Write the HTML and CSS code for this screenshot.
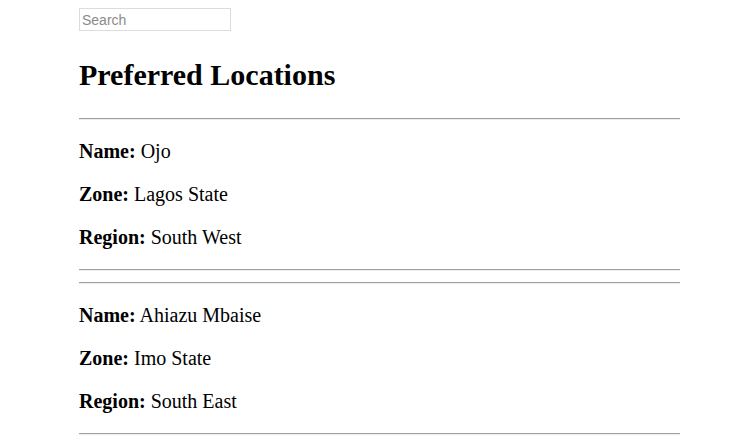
FILE: index.html
```html
<!DOCTYPE html>
<html lang="en">
<head>
  <meta charset="UTF-8" />
  <title>Preferred Locations</title>
  <link rel="stylesheet" href="styles.css">
</head>
<body>
  <div class="contenedor">
    <input class="buscar" type="text" placeholder="Search">
    <h1>Preferred Locations</h1>
    <hr>

    <div class="ubicacion">
      <p><b>Name:</b> Ojo</p>
      <p><b>Zone:</b> Lagos State</p>
      <p><b>Region:</b> South West</p>
      <hr>
    </div>
    <hr class="separador">

    <div class="ubicacion">
      <p><b>Name:</b> Ahiazu Mbaise</p>
      <p><b>Zone:</b> Imo State</p>
      <p><b>Region:</b> South East</p>
      <hr>
    </div>
  </div>
</body>
</html>
```

FILE: styles.css
```css
body {
  margin: 8px;
  font-family: "Liberation Serif", "Times New Roman", serif;
  background: #fff;
  color: #000;
}

.contenedor {
  width: 601px;
  margin-left: 71px;
}

.buscar {
  display: block;
  box-sizing: border-box;
  width: 152px;
  height: 23px;
  margin: 0;
  padding: 1px 2px;
  border: 1px solid #dcdcdc;
  font-family: "Liberation Sans", Arial, sans-serif;
  font-size: 14px;
}

.buscar::placeholder {
  color: #8a8a8a;
}

h1 {
  font-size: 30px;
  margin: 27px 0 26px;
}

hr {
  margin: 0;
  border: 0;
  border-top: 1px solid #a0a0a0;
  border-bottom: 1px solid #ececec;
}

p {
  font-size: 20px;
  margin: 20px 0;
}

.separador {
  margin-top: 11px;
}
```
